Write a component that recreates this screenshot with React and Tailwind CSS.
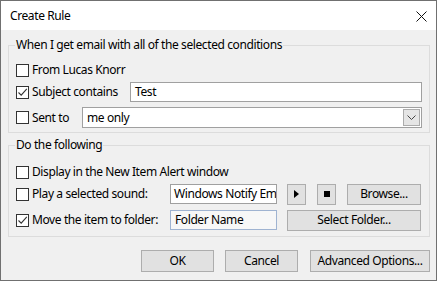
import { useState } from 'react';

const font = { fontFamily: '"Noto Sans", "Segoe UI", sans-serif' };

const Check = ({ checked }) => (
  <span className="w-[13px] h-[13px] shrink-0 border border-[#333333] bg-white flex items-center justify-center">
    {checked && (
      <svg width="11" height="11" viewBox="0 0 11 11">
        <path d="M1.5 5.5 L4.2 8.2 L9.8 1.8" fill="none" stroke="#333333" strokeWidth="1.1" />
      </svg>
    )}
  </span>
);

const Btn = ({ className, children }) => (
  <button className={`h-[21px] bg-[#e1e1e1] border border-[#adadad] text-black text-[12px] leading-none flex items-center justify-center ${className}`}>
    {children}
  </button>
);

const Group = ({ title, className, children }) => (
  <fieldset className={`ml-[7px] mr-[6px] border border-[#dcdcdc] px-[7px] ${className}`}>
    <legend className="px-[1px] text-[12px] leading-[16px] -ml-[1px]">{title}</legend>
    {children}
  </fieldset>
);

export default function App() {
  const [conds] = useState({ from: false, subject: true, sent: false });

  return (
    <div style={font} className="w-[437px] h-[281px] border border-[#707070] bg-[#f0f0f0] text-black text-[12px] tracking-[-0.4px] flex flex-col">
      {/* Title bar */}
      <div className="h-[29px] bg-white flex items-center justify-between pl-[9px] pr-[9px] shrink-0">
        <span className="text-[12px]">Create Rule</span>
        <svg width="11" height="11" viewBox="0 0 11 11" className="mt-[2px]">
          <path d="M0.5 0.5 L10.5 10.5 M10.5 0.5 L0.5 10.5" stroke="#111" strokeWidth="1" />
        </svg>
      </div>

      {/* Conditions */}
      <Group title="When I get email with all of the selected conditions" className="mt-[7px] pt-[7px] pb-[4px]">
        <div className="h-[20px] flex items-center gap-[3px]">
          <Check checked={conds.from} />
          <span>From Lucas Knorr</span>
        </div>
        <div className="h-[20px] mt-[2px] flex items-center">
          <div className="w-[114px] flex items-center gap-[3px]">
            <Check checked={conds.subject} />
            <span>Subject contains</span>
          </div>
          <div className="flex-1 h-[20px] bg-white border border-[#a0a0a0] flex items-center px-[4px]">Test</div>
        </div>
        <div className="h-[21px] mt-[5px] flex items-center">
          <div className="w-[66px] flex items-center gap-[3px]">
            <Check checked={conds.sent} />
            <span>Sent to</span>
          </div>
          <div className="flex-1 h-[21px] bg-white border border-[#a0a0a0] flex items-center pl-[4px] pr-[1px]">
            <span className="flex-1">me only</span>
            <span className="w-[17px] h-[17px] bg-[#e5e5e5] border border-[#acacac] flex items-center justify-center">
              <svg width="9" height="5" viewBox="0 0 9 5">
                <path d="M0.5 0.5 L4.5 4.5 L8.5 0.5" fill="none" stroke="#444" strokeWidth="1" />
              </svg>
            </span>
          </div>
        </div>
      </Group>

      {/* Actions */}
      <Group title="Do the following" className="mt-[4px] pt-[9px] pb-[6px]">
        <div className="h-[20px] flex items-center gap-[3px]">
          <Check checked={false} />
          <span>Display in the New Item Alert window</span>
        </div>
        <div className="h-[20px] mt-[2px] flex items-center">
          <div className="w-[154px] flex items-center gap-[3px]">
            <Check checked={false} />
            <span>Play a selected sound:</span>
          </div>
          <div className="w-[107px] h-[20px] bg-white border border-[#a0a0a0] flex items-center px-[3px] overflow-hidden whitespace-nowrap">Windows Notify Em</div>
          <Btn className="w-[19px] h-[20px] ml-[10px]">
            <svg width="5" height="8" viewBox="0 0 5 8"><path d="M0 0 L5 4 L0 8 Z" fill="#000" /></svg>
          </Btn>
          <Btn className="w-[19px] h-[20px] ml-[11px]">
            <span className="w-[6px] h-[6px] bg-black" />
          </Btn>
          <Btn className="w-[74px] h-[20px] ml-[11px]">Browse...</Btn>
        </div>
        <div className="h-[20px] mt-[6px] flex items-center">
          <div className="w-[154px] flex items-center gap-[3px]">
            <Check checked={true} />
            <span>Move the item to folder:</span>
          </div>
          <div className="w-[107px] h-[20px] bg-[#f7f7f7] border border-[#9fb3d1] flex items-center px-[4px]">Folder Name</div>
          <Btn className="w-[134px] h-[20px] ml-[10px]">Select Folder...</Btn>
        </div>
      </Group>

      {/* Footer buttons */}
      <div className="mt-[13px] mr-[6px] flex justify-end">
        <Btn className="w-[73px] h-[22px]">OK</Btn>
        <Btn className="w-[73px] h-[22px] ml-[11px]">Cancel</Btn>
        <Btn className="w-[120px] h-[22px] ml-[12px]">Advanced Options...</Btn>
      </div>
    </div>
  );
}
